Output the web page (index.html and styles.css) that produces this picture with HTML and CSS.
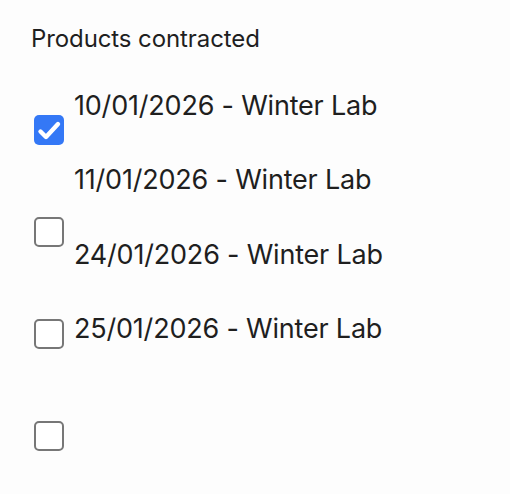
FILE: index.html
```html
<!DOCTYPE html>
<html lang="en">
<head>
<meta charset="utf-8">
<title>Products contracted</title>
<link rel="stylesheet" href="styles.css">
</head>
<body>
<section class="panel">
  <h2 class="title">Products contracted</h2>
  <div class="list">
    <div class="boxes">
      <span class="box checked">
        <svg viewBox="0 0 30 30" width="30" height="30"><polyline points="6.5,16.5 12,22 24,9" fill="none" stroke="#fff" stroke-width="4.4" stroke-linecap="round" stroke-linejoin="round"/></svg>
      </span>
      <span class="box"></span>
      <span class="box"></span>
      <span class="box"></span>
    </div>
    <div class="labels">
      <span class="label">10/01/2026 - Winter Lab</span>
      <span class="label">11/01/2026 - Winter Lab</span>
      <span class="label">24/01/2026 - Winter Lab</span>
      <span class="label">25/01/2026 - Winter Lab</span>
    </div>
  </div>
</section>
</body>
</html>
```

FILE: styles.css
```css
html, body {
  margin: 0;
  padding: 0;
  background: #fdfdfd;
}
body {
  font-family: Inter, "Noto Sans", sans-serif;
  color: #1f1f1f;
  width: 510px;
  height: 494px;
  overflow: hidden;
}
.panel {
  padding: 25px 0 0 31px;
}
.title {
  margin: 0;
  font-size: 24px;
  font-weight: 400;
  line-height: 27px;
  letter-spacing: -0.1px;
  color: #1f1f1f;
}
.list {
  display: flex;
  gap: 10px;
}
.boxes {
  display: flex;
  flex-direction: column;
  gap: 72px;
  margin-top: 63px;
  padding-left: 3px;
}
.box {
  box-sizing: border-box;
  width: 30px;
  height: 30px;
  border: 2px solid #777;
  border-radius: 5px;
  background: #fff;
  display: block;
}
.box.checked {
  border: none;
  background: #3478f6;
}
.box svg {
  display: block;
}
.labels {
  display: flex;
  flex-direction: column;
  padding-top: 17px;
}
.label {
  font-size: 27px;
  line-height: 74.3px;
  letter-spacing: -0.2px;
  white-space: nowrap;
}
```
